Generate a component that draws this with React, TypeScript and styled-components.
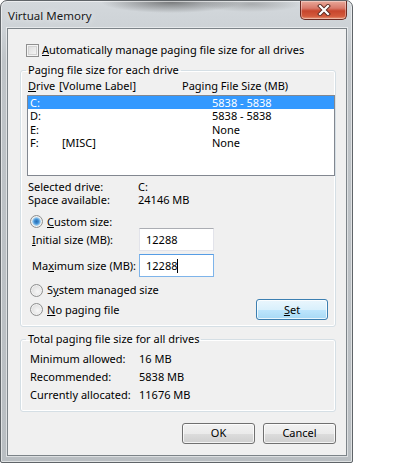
import React from "react";
import styled, { createGlobalStyle } from "styled-components";

const Global = createGlobalStyle`
  html, body { margin: 0; padding: 0; background: #ffffff; }
  body { font-family: "Noto Sans", "Open Sans", sans-serif; font-size: 11px; color: #000; }
  * { box-sizing: border-box; }
`;

const Window = styled.div`
  position: relative;
  width: 353px;
  height: 463px;
  display: flex;
  flex-direction: column;
  border: 1px solid #5f6468;
  border-radius: 7px 7px 2px 2px;
  background:
    radial-gradient(ellipse 70px 11px at 170px 1px, rgba(60, 60, 60, 0.6), rgba(60,60,60,0) 100%),
    radial-gradient(ellipse 50px 8px at 250px 3px, rgba(90, 90, 90, 0.35), rgba(90,90,90,0) 100%),
    linear-gradient(180deg, #d3d8dc 0px, #cdd2d6 28px, #bfc4c8 60px, #b9bec2 100%);
  padding: 0 5px 6px 6px;
  box-shadow: inset 0 0 0 1px rgba(255,255,255,0.55);
`;

const TitleBar = styled.div`
  height: 27px;
  display: flex;
  align-items: flex-start;
  justify-content: space-between;
`;

const Title = styled.div`
  padding: 7px 0 0 1px;
  font-size: 11.5px;
  color: #1a1a1a;
  line-height: 15px;
  text-shadow: 0 0 6px rgba(255,255,255,0.9);
`;

const CloseButton = styled.div`
  width: 47px;
  height: 19px;
  border: 1px solid #6b2a22;
  border-top: none;
  border-radius: 0 0 5px 5px;
  background: linear-gradient(180deg, #e9a99a 0%, #d8796a 40%, #c7462d 55%, #d35a3c 85%, #e89c7e 100%);
  box-shadow: inset 0 0 0 1px rgba(255,255,255,0.35);
  display: flex;
  align-items: center;
  justify-content: center;
`;

const Client = styled.div`
  flex: 1;
  background: #f0f0f0;
  border: 1px solid #7c8388;
  box-shadow: 0 0 0 1px rgba(255,255,255,0.5);
  display: flex;
  flex-direction: column;
`;

const CheckRow = styled.div`
  display: flex;
  align-items: center;
  height: 14px;
  margin: 14px 0 0 18px;
  gap: 3px;
  line-height: 14px;
`;

const CheckBox = styled.span`
  width: 13px;
  height: 13px;
  border: 1px solid #8f8f8f;
  background: linear-gradient(135deg, #d8d8d8 0%, #ececec 60%, #fafafa 100%);
  box-shadow: inset 0 0 0 1px #f4f4f4, inset 0 0 0 2px #d2d2d2;
  flex: none;
`;

const Group = styled.fieldset<{ $top: number }>`
  margin: ${(p) => p.$top}px 10px 0 12px;
  padding: 0;
  border: 1px solid #d5dfe5;
  border-radius: 3px;
  box-shadow: inset 0 0 0 1px #ffffff;
  min-width: 0;
`;

const Legend = styled.legend`
  margin-left: 5px;
  padding: 0 2px;
  line-height: 14px;
  height: 14px;
`;

const HeaderRow = styled.div`
  display: flex;
  height: 14px;
  line-height: 14px;
  margin-top: 2px;
  padding-left: 7px;
`;

const Cell = styled.span<{ $w?: number }>`
  width: ${(p) => (p.$w ? `${p.$w}px` : "auto")};
  flex: none;
  white-space: nowrap;
`;

const ListBox = styled.div`
  margin: 2px 0 0 6px;
  height: 81px;
  border: 1px solid #828790;
  background: #ffffff;
`;

const ListRow = styled.div<{ $sel?: boolean }>`
  display: flex;
  height: 13.4px;
  line-height: 13.4px;
  padding-left: 2px;
  background: ${(p) => (p.$sel ? "#3399ff" : "transparent")};
  color: ${(p) => (p.$sel ? "#ffffff" : "#000")};
`;

const InfoBlock = styled.div<{ $top: number; $left: number; $h: number; $labelW: number }>`
  margin-top: ${(p) => p.$top}px;
  padding-left: ${(p) => p.$left}px;
  display: grid;
  grid-template-columns: ${(p) => p.$labelW}px auto;
  grid-auto-rows: ${(p) => p.$h}px;
  align-items: center;
  line-height: 13px;
`;

const RadioRow = styled.div<{ $top: number; $h?: number }>`
  display: flex;
  align-items: center;
  gap: 4px;
  height: ${(p) => p.$h ?? 14}px;
  margin: ${(p) => p.$top}px 0 0 9px;
  line-height: 14px;
`;

const Radio = styled.span<{ $checked?: boolean }>`
  width: 13px;
  height: 13px;
  border-radius: 50%;
  border: 1px solid #8e8f8f;
  background: ${(p) =>
    p.$checked
      ? "radial-gradient(circle at 50% 50%, #2b6eb0 0, #3b8ad0 2px, #9fd0f2 4px, #e4e4e4 4.6px, #f4f4f4 100%)"
      : "radial-gradient(circle at 60% 60%, #f7f7f7 0, #e2e2e2 60%, #d0d0d0 100%)"};
  box-shadow: inset 0 0 0 1px #f2f2f2;
  flex: none;
`;

const FieldRow = styled.div<{ $top: number }>`
  display: flex;
  align-items: center;
  height: 23px;
  margin-top: ${(p) => p.$top}px;
  padding-left: 11px;
`;

const FieldLabel = styled.span`
  width: 107px;
  flex: none;
`;

const TextBox = styled.div<{ $focus?: boolean }>`
  width: 75px;
  height: 23px;
  background: #ffffff;
  border: 1px solid ${(p) => (p.$focus ? "#7eb4ea" : "#e2e3ea")};
  border-top-color: ${(p) => (p.$focus ? "#569de5" : "#abadb3")};
  padding: 0 0 0 6px;
  display: flex;
  align-items: center;
  line-height: 14px;
`;

const Caret = styled.span`
  display: inline-block;
  width: 1px;
  height: 14px;
  background: #000;
`;

const ActionRow = styled.div`
  display: flex;
  align-items: center;
  justify-content: space-between;
  height: 21px;
  margin: 2px 7px 6px 9px;
`;

const RadioLabel = styled.div`
  display: flex;
  align-items: center;
  gap: 4px;
`;

const Button = styled.div<{ $default?: boolean; $w: number }>`
  width: ${(p) => p.$w}px;
  height: 21px;
  border-radius: 3px;
  border: 1px solid ${(p) => (p.$default ? "#3c7fb1" : "#707070")};
  background: ${(p) =>
    p.$default
      ? "linear-gradient(180deg, #eaf6fd 0%, #d9f0fc 50%, #bee6fd 51%, #a7d9f5 100%)"
      : "linear-gradient(180deg, #f2f2f2 0%, #ebebeb 50%, #dddddd 51%, #cfcfcf 100%)"};
  box-shadow: inset 0 0 0 1px rgba(255,255,255,0.75);
  display: flex;
  align-items: center;
  justify-content: center;
  line-height: 14px;
`;

const Footer = styled.div`
  display: flex;
  justify-content: flex-end;
  gap: 8px;
  margin: 11px 10px 0 0;
`;

const Spacer = styled.div<{ $h: number }>`
  height: ${(p) => p.$h}px;
`;

export default function App() {
  return (
    <>
      <Global />
      <Window>
        <TitleBar>
          <Title>Virtual Memory</Title>
          <CloseButton>
            <svg width="14" height="12" viewBox="0 0 14 12">
              <path d="M3 2 L11 10 M11 2 L3 10" stroke="#5a2a22" strokeWidth="4" strokeLinecap="square" />
              <path d="M3 2 L11 10 M11 2 L3 10" stroke="#ffffff" strokeWidth="2.2" strokeLinecap="square" />
            </svg>
          </CloseButton>
        </TitleBar>
        <Client>
          <CheckRow>
            <CheckBox />
            <span>
              <u>A</u>utomatically manage paging file size for all drives
            </span>
          </CheckRow>

          <Group $top={6}>
            <Legend>Paging file size for each drive</Legend>
            <HeaderRow>
              <Cell $w={31}>
                <u>D</u>rive
              </Cell>
              <Cell $w={123}>[Volume Label]</Cell>
              <Cell>Paging File Size (MB)</Cell>
            </HeaderRow>
            <ListBox>
              {[
                ["C:", "", "5838 - 5838"],
                ["D:", "", "5838 - 5838"],
                ["E:", "", "None"],
                ["F:", "[MISC]", "None"],
              ].map(([d, l, s], i) => (
                <ListRow key={d} $sel={i === 0}>
                  <Cell $w={32}>{d}</Cell>
                  <Cell $w={150}>{l}</Cell>
                  <Cell>{s}</Cell>
                </ListRow>
              ))}
            </ListBox>
            <InfoBlock $top={4} $left={7} $h={13} $labelW={110}>
              <span>Selected drive:</span>
              <span>C:</span>
              <span>Space available:</span>
              <span>24146 MB</span>
            </InfoBlock>
            <RadioRow $top={9} $h={13}>
              <Radio $checked />
              <span>
                <u>C</u>ustom size:
              </span>
            </RadioRow>
            <FieldRow $top={0}>
              <FieldLabel>
                <u>I</u>nitial size (MB):
              </FieldLabel>
              <TextBox>12288</TextBox>
            </FieldRow>
            <FieldRow $top={3}>
              <FieldLabel>
                Ma<u>x</u>imum size (MB):
              </FieldLabel>
              <TextBox $focus>
                12288
                <Caret />
              </TextBox>
            </FieldRow>
            <RadioRow $top={6}>
              <Radio />
              <span>
                S<u>y</u>stem managed size
              </span>
            </RadioRow>
            <ActionRow>
              <RadioLabel>
                <Radio />
                <span>
                  <u>N</u>o paging file
                </span>
              </RadioLabel>
              <Button $default $w={72}>
                <span>
                  <u>S</u>et
                </span>
              </Button>
            </ActionRow>
          </Group>

          <Group $top={5}>
            <Legend>Total paging file size for all drives</Legend>
            <InfoBlock $top={3} $left={9} $h={18.3} $labelW={109}>
              <span>Minimum allowed:</span>
              <span>16 MB</span>
              <span>Recommended:</span>
              <span>5838 MB</span>
              <span>Currently allocated:</span>
              <span>11676 MB</span>
            </InfoBlock>
            <Spacer $h={7} />
          </Group>

          <Footer>
            <Button $w={73}>OK</Button>
            <Button $w={73}>Cancel</Button>
          </Footer>
        </Client>
      </Window>
    </>
  );
}
